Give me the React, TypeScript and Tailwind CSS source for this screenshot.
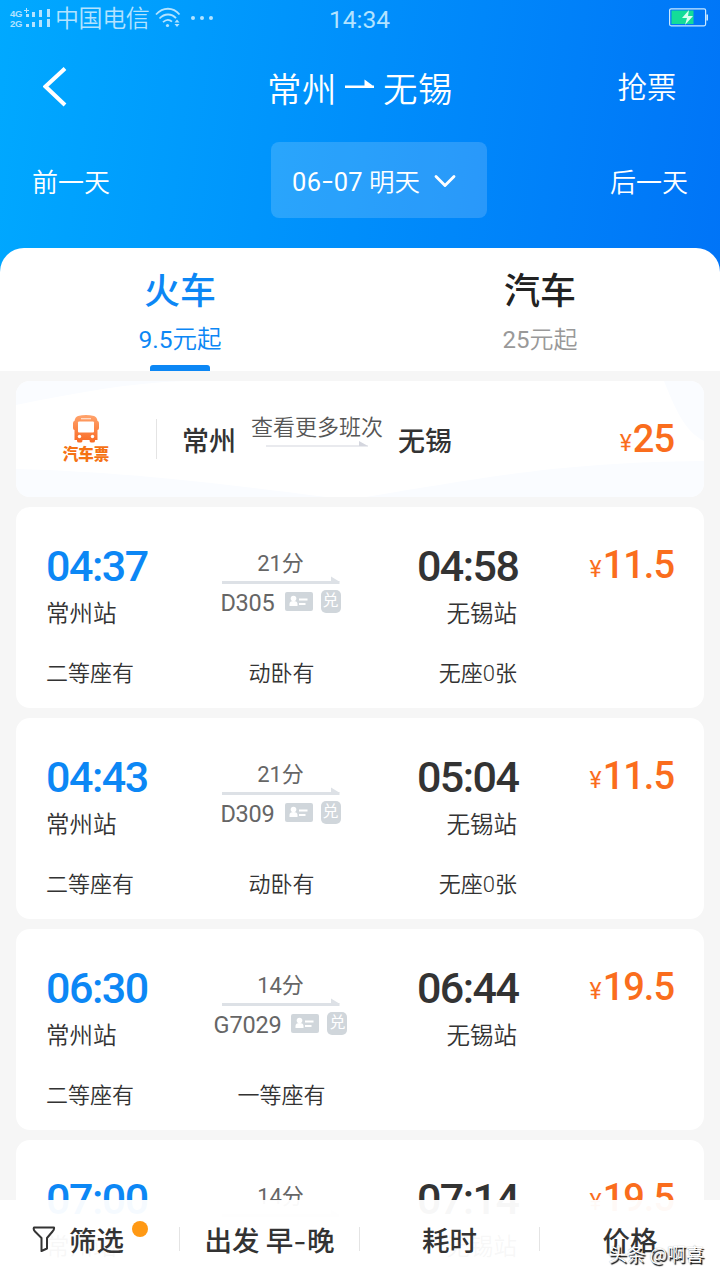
import { ChevronDown } from "lucide-react"

interface Seat {
  id: string
  label: string
}

interface Train {
  depart: string
  arrive: string
  duration: string
  code: string
  price: string
  seats: Seat[]
}

const trains: Train[] = [
  {
    depart: "04:37",
    arrive: "04:58",
    duration: "21分",
    code: "D305",
    price: "11.5",
    seats: [
      { id: "second", label: "二等座有" },
      { id: "sleeper", label: "动卧有" },
      { id: "standing", label: "无座0张" },
    ],
  },
  {
    depart: "04:43",
    arrive: "05:04",
    duration: "21分",
    code: "D309",
    price: "11.5",
    seats: [
      { id: "second", label: "二等座有" },
      { id: "sleeper", label: "动卧有" },
      { id: "standing", label: "无座0张" },
    ],
  },
  {
    depart: "06:30",
    arrive: "06:44",
    duration: "14分",
    code: "G7029",
    price: "19.5",
    seats: [
      { id: "second", label: "二等座有" },
      { id: "first", label: "一等座有" },
    ],
  },
  {
    depart: "07:00",
    arrive: "07:14",
    duration: "14分",
    code: "",
    price: "19.5",
    seats: [],
  },
]

function StatusBar() {
  return (
    <div className="flex h-[38px] items-center justify-between pl-[10px] pr-[11px] text-[#b3e3ff]">
      <div className="flex w-[240px] items-center">
        <div className="w-[14px] font-['Liberation_Sans',sans-serif] text-[9.500px] font-bold leading-[10px] tracking-[-0.3px]">
          <div>4G</div>
          <div>2G</div>
        </div>
        <svg className="mb-[3px]" width="28" height="20" viewBox="0 0 28 20" fill="currentColor">
          <path d="M0 2h5v1H0zM2 0h1v5H2z" />
          <path d="M2 6h3v3H2zM8 4h3v5H8zM15 2h3v7h-3zM23 1h3v8h-3z" />
          <path d="M2 16h3v3H2zM8 14h3v5H8zM15 12h3v7h-3zM23 11h3v8h-3z" />
        </svg>
        <span className="mb-[4px] ml-[3px] w-[100px] whitespace-nowrap text-[24px] font-[350] leading-8 tracking-[-0.4px]">中国电信</span>
        <svg className="mb-[2px]" width="26" height="22" viewBox="0 0 26 22" fill="none" stroke="currentColor" strokeWidth="1.8">
          <path d="M1 7.500C8-.2 18-.2 24.500 7.500M4.500 11.500c5-5.300 12-5.300 16.500-.3M8 15.200c3-2.800 6.500-2.800 9-.5" />
          <circle cx="12.500" cy="18.500" r="1.600" fill="currentColor" stroke="none" />
          <path d="M19.500 15.500h5l-2.500-3zM19.500 17h5l-2.500 3z" fill="currentColor" stroke="none" />
        </svg>
        <svg className="mb-[2px] ml-[10px]" width="24" height="4" viewBox="0 0 24 4" fill="currentColor">
          <circle cx="2" cy="2" r="2" />
          <circle cx="11" cy="2" r="2" />
          <circle cx="20" cy="2" r="2" />
        </svg>
      </div>
      <div className="w-[220px] pt-[2px] text-center font-['Roboto',sans-serif] text-[24.500px] font-normal leading-8">14:34</div>
      <div className="flex w-[240px] justify-end pb-[3px]">
        <svg width="40" height="19" viewBox="0 0 40 19" fill="none">
          <rect x="0.600" y="0.800" width="36" height="17" rx="1.500" stroke="#c9e8ff" strokeWidth="1.200" />
          <rect x="2.500" y="2.500" width="22" height="13.500" fill="#14dc98" />
          <path d="M20 2l-7 8h5l-2 7 8-9h-5z" fill="#d8fff0" />
          <path d="M38.200 6.500v6" stroke="#c9e8ff" strokeWidth="1.600" />
        </svg>
      </div>
    </div>
  )
}

function Header() {
  return (
    <header>
      <StatusBar />
      <div className="flex h-[98px] items-center justify-between px-[43px] text-white">
        <svg width="60" height="40" viewBox="0 0 60 40" fill="none" stroke="white" strokeWidth="4">
          <path d="M22 1.500L2.500 19.500 22 38" />
        </svg>
        <h1 className="flex items-center text-[34.500px] font-[350] leading-10 tracking-[0.5px]">
          常州
          <svg className="mb-[6px] ml-[8px] mr-[9px]" width="29" height="12" viewBox="0 0 29 12" fill="white">
            <path d="M0 7.500h29v2.600H0zM19.500 1.500L29 8.500h-9.500z" />
          </svg>
          无锡
        </h1>
        <button className="mb-1 w-[60px] text-[29.500px] font-[350] leading-10">抢票</button>
      </div>
      <div className="flex h-[112px] items-start px-8 pt-[6px] text-white">
        <button className="h-[76px] w-[100px] text-left text-[26px] font-[350]">前一天</button>
        <button className="ml-[139px] flex h-[76px] w-[216px] items-center rounded-lg bg-white/16 pl-[21px] pt-[4px] text-[25.500px] font-[350]">
          <span className="whitespace-nowrap font-['Roboto','Noto_Sans_CJK_SC',sans-serif]">
            <span className="font-normal tracking-[0.3px]">
              06<span className="relative -top-px mx-[2.500px] inline-block scale-x-150">-</span>07
            </span>{" "}
            明天
          </span>
          <ChevronDown className="mb-[2px] ml-[7px] h-[36px] w-[36px] shrink-0" strokeWidth={1.9} />
        </button>
        <button className="ml-auto h-[76px] w-[100px] text-right text-[26px] font-[350]">后一天</button>
      </div>
    </header>
  )
}

function Tabs() {
  return (
    <div className="flex h-[123px] rounded-t-[24px] bg-white text-center">
      <div className="flex flex-1 flex-col items-center text-[#0c87f5]">
        <div className="mt-[15px] h-[50px] text-[36px] font-medium leading-[50px]">火车</div>
        <div className="mt-[9px] h-[36px] font-['Roboto','Noto_Sans_CJK_SC',sans-serif] text-[24.500px] font-[350] leading-[36px]">
          <span className="font-normal">9.5</span>元起
        </div>
        <div className="mt-[7px] h-[6px] w-[60px] rounded-t-[3px] bg-[#0c87f5]" />
      </div>
      <div className="flex flex-1 flex-col items-center">
        <div className="mt-[15px] h-[50px] text-[36px] font-medium leading-[50px] text-[#222]">汽车</div>
        <div className="mt-[9px] h-[36px] font-['Roboto','Noto_Sans_CJK_SC',sans-serif] text-[24px] font-[350] leading-[36px] text-[#999]">
          <span className="font-normal">25</span>元起
        </div>
      </div>
    </div>
  )
}

function Price({ value }: { value: string }) {
  return (
    <div className="flex items-baseline justify-end font-['Roboto',sans-serif] text-[38px] font-medium leading-[44px] tracking-[-1px] text-[#fa6d1d]">
      <span className="relative -top-px mr-[2px] text-[23px] font-normal">¥</span>
      {value}
    </div>
  )
}

function BusCard() {
  return (
    <div className="relative flex h-[116px] items-center overflow-hidden rounded-[14px] bg-white pr-[30px]">
      <svg className="absolute inset-0" width="688" height="116" viewBox="0 0 688 116">
        <path d="M0 0h170C110 2 60 12 0 24zM648 0h40v60c-20-10-30-35-40-60zM0 88c110 3 200 14 310 28H0zM350 116c120-20 200-35 338-36v36z" fill="#fafcff" />
      </svg>
      <div className="relative flex w-[140px] flex-col items-center">
        <svg width="28" height="28" viewBox="0 0 28 28">
          <defs>
            <linearGradient id="bus" x1="0" y1="0" x2="0" y2="1">
              <stop offset="0" stopColor="#ffa36c" />
              <stop offset="1" stopColor="#f96a24" />
            </linearGradient>
          </defs>
          <path d="M6 1Q14-1 22 1Q25 2 25.500 6Q27 6 27 9v4q0 2-1.500 2v10H23v1q0 1.500-2 1.500h-2q-1.500 0-1.500-2.500h-7q0 2.500-1.500 2.500H7q-2 0-2-1.500v-1H2.500V15Q1 15 1 13V9q0-3 1.500-3Q3 2 6 1z" fill="url(#bus)" />
          <path d="M9 3.700h10" stroke="#fff" strokeWidth="1.200" opacity=".7" />
          <rect x="6" y="6.500" width="16" height="11" rx="1" fill="#fff" />
          <circle cx="7.500" cy="21.500" r="1.700" fill="#fff" />
          <circle cx="20.500" cy="21.500" r="1.700" fill="#fff" />
        </svg>
        <div className="mb-[2px] mt-[1px] text-[15.500px] font-black leading-[18px] text-[#f57214]">汽车票</div>
      </div>
      <div className="h-10 w-px bg-[#e4e4e4]" />
      <div className="relative ml-[25px] mt-[2px] text-[27px] font-medium leading-9 text-[#333]">常州</div>
      <div className="relative ml-[15px] mt-[-22px] flex flex-col items-center">
        <span className="text-[22px] font-[350] leading-8 text-[#555]">查看更多班次</span>
        <svg width="102" height="6" viewBox="0 0 102 6">
          <path d="M0 4.500h102v1H0zM93 0l9 5h-9z" fill="#d4d6de" />
        </svg>
      </div>
      <div className="relative ml-[15px] mt-[2px] text-[27px] font-medium leading-9 text-[#333]">无锡</div>
      <div className="relative ml-auto mt-[6px]">
        <Price value="25" />
      </div>
    </div>
  )
}

function RouteInfo({ duration, code }: { duration: string; code: string }) {
  return (
    <div className="relative -left-px flex flex-col items-center font-['Roboto','Noto_Sans_CJK_SC',sans-serif] text-[#666]">
      <div className="h-[26px] text-[22px] font-normal leading-7">{duration}</div>
      <svg width="118" height="9" viewBox="0 0 118 9" fill="#dde1e6">
        <path d="M0 5h117.500v3H0zM109 .5l9 5.500h-9z" />
      </svg>
      {code && (
        <div className="mt-[4px] flex h-7 items-center">
          <span className="text-[23.500px] font-normal leading-7 tracking-[-0.2px]">{code}</span>
          <svg className="mb-[4px] ml-[10px]" width="28" height="19" viewBox="0 0 28 19">
            <rect width="28" height="19" rx="2" fill="#d0d6db" />
            <circle cx="8.500" cy="6.500" r="2.800" fill="#fff" />
            <path d="M4.500 14v-2q0-3 4-3t4 3v2z" fill="#fff" />
            <path d="M14 7.500h8.500M14 12h6.500" stroke="#fff" strokeWidth="1.800" />
          </svg>
          <span className="mb-[4px] ml-2 h-[23px] w-5 rounded-[5px] bg-[#d0d6db] text-center text-[16px] leading-[22px] text-white">兑</span>
        </div>
      )}
    </div>
  )
}

function TrainCard({ train }: { train: Train }) {
  return (
    <div className="h-[201px] shrink-0 rounded-[14px] bg-white pl-[30px] pr-[30px] pt-[37px] text-[#333]">
      <div className="grid h-[84px] grid-cols-4">
        <div>
          <div className="font-['Roboto',sans-serif] text-[43px] font-medium leading-[44px] tracking-[-1.5px] text-[#0c87f5]">{train.depart}</div>
          <div className="mt-[8px] text-[23.500px] font-[350] leading-8">常州站</div>
        </div>
        <div className="pt-[6px]">
          <RouteInfo duration={train.duration} code={train.code} />
        </div>
        <div className="text-right">
          <div className="mr-[-1.500px] font-['Roboto',sans-serif] text-[43px] font-medium leading-[44px] tracking-[-1.5px]">{train.arrive}</div>
          <div className="mt-[8px] text-[23.500px] font-[350] leading-8">无锡站</div>
        </div>
        <div className="mt-[-1px]">
          <Price value={train.price} />
        </div>
      </div>
      <div className="mt-[30px] grid grid-cols-4 font-['Roboto','Noto_Sans_CJK_SC',sans-serif] text-[22px] font-[350] leading-8">
        {train.seats.map((seat, index) => (
          <span key={seat.id} className={index === 0 ? "text-left" : index === 1 ? "text-center" : "text-right"}>
            {seat.label}
          </span>
        ))}
      </div>
    </div>
  )
}

function FilterBar() {
  return (
    <nav className="absolute inset-x-0 bottom-0 grid h-20 grid-cols-4 bg-white/96 pb-[3px] text-[27.500px] font-medium leading-10 text-[#333]">
      <div className="flex items-center pl-[32px]">
        <svg width="24" height="26" viewBox="0 0 24 26" fill="none" stroke="#333" strokeWidth="2" strokeLinejoin="round">
          <path d="M2 1.500h20q.5 2-1.500 4L15 12v10.500L9.500 25V12L3 5.500Q1 3.500 2 1.500z" />
        </svg>
        <span className="ml-[13px]">筛选</span>
        <span className="mb-[19px] ml-[8px] h-4 w-4 rounded-full bg-[#ff9914]" />
        <span className="ml-auto h-6 w-px bg-[#e4e4e4]" />
      </div>
      <div className="flex items-center">
        <span className="flex-1 whitespace-nowrap text-center">
          出发 早<span className="mx-[2px] inline-block scale-x-125">-</span>晚
        </span>
        <span className="h-6 w-px bg-[#e4e4e4]" />
      </div>
      <div className="flex items-center">
        <span className="flex-1 text-center">耗时</span>
        <span className="h-6 w-px bg-[#e4e4e4]" />
      </div>
      <div className="flex items-center justify-center">价格</div>
      <span className="absolute bottom-[13px] right-[16px] whitespace-nowrap text-[18.500px] font-normal leading-7 text-white [text-shadow:1.5px_1.5px_1px_#000,0_0_1px_#0006]">
        头条 @啊喜
      </span>
    </nav>
  )
}

export default function App() {
  return (
    <div className="relative flex h-[1280px] w-[720px] flex-col overflow-hidden bg-[#f6f6f6] font-['Noto_Sans_CJK_SC',sans-serif]">
      <div className="bg-linear-[98deg,#00a9ff,#0073f7]">
        <Header />
        <Tabs />
      </div>
      <main className="flex flex-col gap-[10px] px-4 pt-[10px]">
        <BusCard />
        {trains.map((train) => (
          <TrainCard key={train.depart} train={train} />
        ))}
      </main>
      <FilterBar />
    </div>
  )
}
